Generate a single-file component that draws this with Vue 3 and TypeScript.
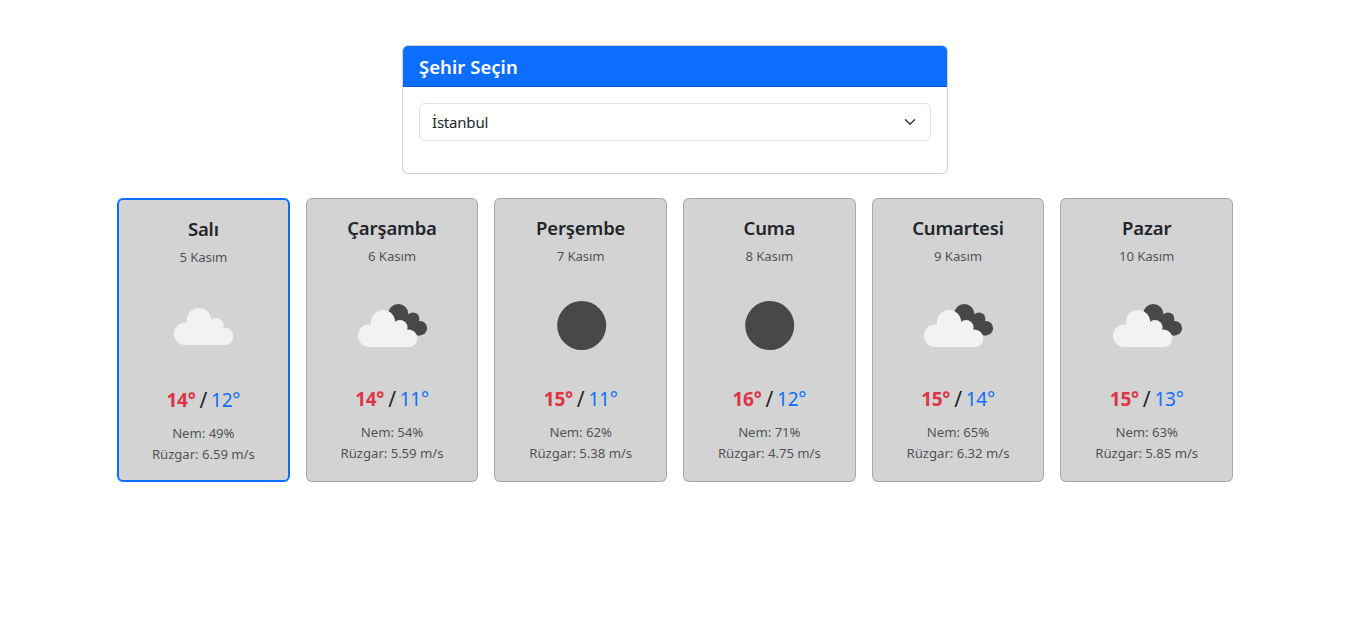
<script setup lang="ts">
import { ref } from 'vue'

type Sky = 'cloud' | 'broken' | 'clear'

interface DayForecast {
  day: string
  date: string
  sky: Sky
  high: number
  low: number
  humidity: number
  wind: string
}

const city = ref('İstanbul')
const cities: string[] = ['İstanbul']
const selected = ref(0)

const forecast: DayForecast[] = [
  { day: 'Salı', date: '5 Kasım', sky: 'cloud', high: 14, low: 12, humidity: 49, wind: '6.59' },
  { day: 'Çarşamba', date: '6 Kasım', sky: 'broken', high: 14, low: 11, humidity: 54, wind: '5.59' },
  { day: 'Perşembe', date: '7 Kasım', sky: 'clear', high: 15, low: 11, humidity: 62, wind: '5.38' },
  { day: 'Cuma', date: '8 Kasım', sky: 'clear', high: 16, low: 12, humidity: 71, wind: '4.75' },
  { day: 'Cumartesi', date: '9 Kasım', sky: 'broken', high: 15, low: 14, humidity: 65, wind: '6.32' },
  { day: 'Pazar', date: '10 Kasım', sky: 'broken', high: 15, low: 13, humidity: 63, wind: '5.85' },
]
</script>

<template>
  <main class="container">
    <section class="picker">
      <h5 class="picker-header">Şehir Seçin</h5>
      <div class="picker-body">
        <div class="select-wrap">
          <select v-model="city" class="select">
            <option v-for="c in cities" :key="c" :value="c">{{ c }}</option>
          </select>
          <svg class="chevron" viewBox="0 0 16 16" width="16" height="12">
            <path d="m2 5 6 6 6-6" fill="none" stroke="#343a40" stroke-width="2" stroke-linecap="round" stroke-linejoin="round" />
          </svg>
        </div>
      </div>
    </section>

    <section class="days">
      <article
        v-for="(d, i) in forecast"
        :key="d.date"
        class="day"
        :class="{ active: i === selected }"
        @click="selected = i"
      >
        <h5 class="name">{{ d.day }}</h5>
        <p class="date">{{ d.date }}</p>
        <svg class="sky" viewBox="0 0 100 100" width="100" height="100">
          <circle v-if="d.sky === 'clear'" cx="50.7" cy="50.5" r="24.5" fill="#48484a" />
          <g v-if="d.sky === 'broken'" fill="#48484a">
            <circle cx="56.3" cy="39.2" r="10.2" />
            <circle cx="71" cy="43.8" r="6.4" />
            <circle cx="77.8" cy="53.2" r="7.3" />
            <path d="M50 45 65 39 72 43 79 50 77.8 60.4 66 60Z" />
          </g>
          <g v-if="d.sky !== 'clear'" fill="#f2f2f2" :transform="d.sky === 'broken' ? 'translate(-4.5 3)' : 'translate(0.5 0)'">
            <circle cx="45.5" cy="44.2" r="12.2" />
            <circle cx="62.5" cy="49.5" r="7.6" />
            <circle cx="31.8" cy="57.8" r="11.3" />
            <circle cx="71" cy="60.3" r="8.8" />
            <path d="M31.8 69.1V50L45 42 63 46 71 55V69.1Z" />
          </g>
        </svg>
        <div class="temps"><strong class="high">{{ d.high }}°</strong><span class="slash">/</span><span class="low">{{ d.low }}°</span></div>
        <div class="detail">Nem: {{ d.humidity }}%</div>
        <div class="detail">Rüzgar: {{ d.wind }} m/s</div>
      </article>
    </section>
  </main>
</template>

<style>
body {
  margin: 0;
  background: #fff;
}
</style>

<style scoped>
.container {
  box-sizing: border-box;
  width: 1140px;
  margin: 0 auto;
  padding: 45px 12px 0;
  font-family: 'Noto Sans', 'Open Sans', sans-serif;
  color: #212529;
}

.picker {
  box-sizing: border-box;
  width: 546px;
  margin: 0 auto 24px;
  border: 1px solid rgba(0, 0, 0, 0.175);
  border-radius: 6px;
  background: #fff;
}

.picker-header {
  margin: 0;
  padding: 9px 16px 7px;
  border-bottom: 1px solid rgba(0, 0, 0, 0.175);
  border-radius: 5px 5px 0 0;
  background: #0d6efd;
  color: #fff;
  font-size: 18.5px;
  font-weight: 600;
  line-height: 24px;
  letter-spacing: 0.05px;
}

.picker-body {
  padding: 16px 16px 32px;
}

.select-wrap {
  position: relative;
}

.select {
  display: block;
  box-sizing: border-box;
  width: 100%;
  height: 38px;
  padding: 6px 36px 6px 12px;
  border: 1px solid #dee2e6;
  border-radius: 6px;
  background: #fff;
  color: #212529;
  font-family: inherit;
  font-size: 15px;
  line-height: 24px;
  letter-spacing: -0.2px;
  appearance: none;
}

.chevron {
  position: absolute;
  top: 13px;
  right: 13px;
  pointer-events: none;
}

.days {
  display: grid;
  grid-template-columns: repeat(6, 1fr);
  gap: 16px;
}

.day {
  box-sizing: border-box;
  height: 284px;
  padding: 17px 0 15px;
  border: 1px solid rgba(0, 0, 0, 0.2);
  border-radius: 6px;
  background: #d3d3d3;
  text-align: center;
  cursor: pointer;
}

.day.active {
  border: 2px solid #0d6efd;
}

.name {
  margin: 0 0 6px;
  font-size: 18.5px;
  font-weight: 600;
  line-height: 24px;
  letter-spacing: -0.15px;
}

.date {
  margin: 0 0 8px;
  color: rgba(33, 37, 41, 0.75);
  font-size: 13.2px;
  line-height: 21px;
  letter-spacing: -0.1px;
}

.sky {
  display: block;
  margin: 0 auto 9px;
}

.temps {
  display: flex;
  justify-content: center;
  gap: 4px;
  margin-bottom: 8px;
  font-size: 19px;
  line-height: 30px;
  letter-spacing: -0.25px;
}

.high {
  color: #dc3545;
  font-weight: 700;
}

.slash {
  font-size: 21px;
}

.low {
  color: #0d6efd;
}

.detail {
  color: rgba(33, 37, 41, 0.75);
  font-size: 13.2px;
  line-height: 21px;
  letter-spacing: -0.05px;
}
</style>
